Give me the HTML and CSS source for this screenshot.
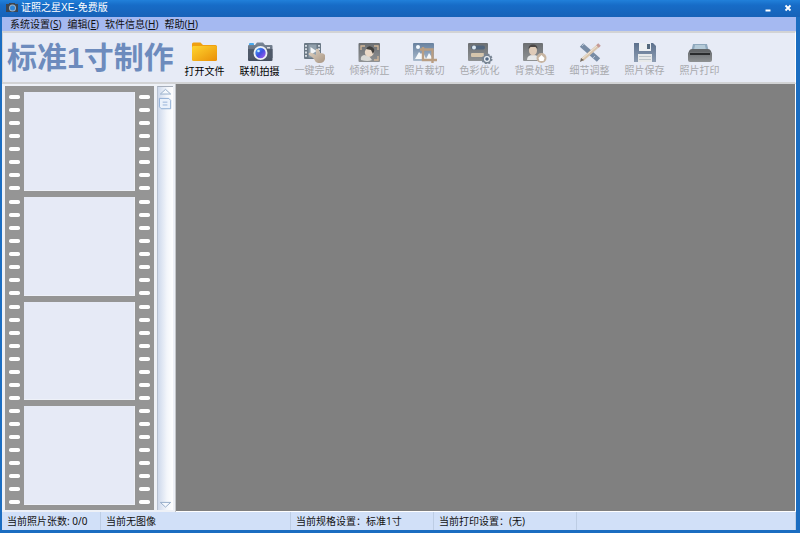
FILE: index.html
```html
<!DOCTYPE html>
<html lang="zh-CN">
<head>
<meta charset="utf-8">
<title>证照之星XE-免费版</title>
<link rel="stylesheet" href="styles.css">
</head>
<body>
<svg class="defs" aria-hidden="true">
  <defs>
    <pattern id="perf" width="12" height="13" patternUnits="userSpaceOnUse"><rect x="0" y="3" width="11" height="4" rx="1.8" fill="#fff"/></pattern>
    <linearGradient id="gold" x1="0" y1="0" x2="1" y2="1"><stop offset="0" stop-color="#ffd52e"/><stop offset="1" stop-color="#e98e08"/></linearGradient>
    <linearGradient id="steel" x1="0" y1="0" x2="0" y2="1"><stop offset="0" stop-color="#7b8898"/><stop offset="1" stop-color="#454e5e"/></linearGradient>
    <linearGradient id="disk" x1="0" y1="0" x2="0" y2="1"><stop offset="0" stop-color="#5c708d"/><stop offset="1" stop-color="#8d9db3"/></linearGradient>
    <linearGradient id="lens" x1="0" y1="0" x2="1" y2="1"><stop offset="0" stop-color="#3bb4ff"/><stop offset=".5" stop-color="#3f4fe0"/><stop offset="1" stop-color="#b45cf0"/></linearGradient>
    <linearGradient id="dark" x1="0" y1="0" x2="0" y2="1"><stop offset="0" stop-color="#6c6f72"/><stop offset="1" stop-color="#8f9294"/></linearGradient>
    <linearGradient id="blue" x1="0" y1="0" x2="0" y2="1"><stop offset="0" stop-color="#68819f"/><stop offset="1" stop-color="#a9bacd"/></linearGradient>
    <linearGradient id="skin" x1="0" y1="0" x2="1" y2="1"><stop offset="0" stop-color="#e3d6c6"/><stop offset="1" stop-color="#a89684"/></linearGradient>
  </defs>
</svg>
<div class="window">
  <header class="titlebar">
    <svg class="appicon" viewBox="0 0 12 10"><path d="M0 1h3V0h6v1h3v8H0z" fill="#3c4551"/><circle cx="6.500" cy="5" r="3.500" fill="#9fb4c8"/><circle cx="6.500" cy="5" r="2.500" fill="#2f86d8"/></svg>
    <h1 class="title">证照之星XE-免费版</h1>
    <button class="winbtn" aria-label="最小化"><svg viewBox="0 0 8 8"><path d="M1.500 6.500h5" stroke="#fff" stroke-width="2"/></svg></button>
    <button class="winbtn" aria-label="关闭"><svg viewBox="0 0 8 8"><path d="M1.500 1.500l5 5M6.500 1.500l-5 5" stroke="#fff" stroke-width="1.800"/></svg></button>
  </header>
  <nav class="menubar">
    <button>系统设置(<u>S</u>)</button>
    <button>编辑(<u>E</u>)</button>
    <button>软件信息(<u>H</u>)</button>
    <button>帮助(<u>H</u>)</button>
  </nav>
  <div class="toolbar">
    <h2 class="mode">标准1寸制作</h2>
    <div class="tools">
      <button class="tool"><svg viewBox="0 0 28 24"><path d="M1 4q0-1.500 1.500-1.500h7L12 5h12.500Q26 5 26 6.500V13H1z" fill="#f0a010"/><rect x="1" y="6" width="25" height="15" rx="1.500" fill="url(#gold)"/></svg><span>打开文件</span></button>
      <button class="tool"><svg viewBox="0 0 28 24"><rect x="3" y="3" width="5" height="3" rx="1" fill="#48a9ee"/><path d="M2 6q0-1 1-1h6l2-2.500h6L19 5h6.500q1 0 1 1v14q0 1-1 1H3q-1 0-1-1z" fill="url(#steel)"/><rect x="2" y="9" width="24.500" height="9" fill="#4f5969"/><circle cx="14.500" cy="13" r="7" fill="#eef1f5"/><circle cx="14.500" cy="13" r="5.200" fill="url(#lens)"/><circle cx="12.500" cy="11" r="1.300" fill="#bfeaff"/><rect x="21" y="7" width="3" height="1.500" fill="#ddd"/></svg><span>联机拍摄</span></button>
      <button class="tool" disabled><svg viewBox="0 0 28 24"><rect x="3" y="3" width="17" height="16" rx="1" fill="#6b7986"/><path d="M5 5v13M18 5v13" stroke="#e8edf2" stroke-width="1.700" stroke-dasharray="1.800 1.500"/><rect x="7.500" y="4.500" width="8" height="13" fill="#91a0ac"/><path d="M9.500 7l6 4-6 4z" fill="#f2f5f8"/><path d="M8 13q1-1 3 0l4 2V9q2-1 3 1l1 3q4 0 5 2v4q-1 4-5 4h-2q-3-1-4-4l-2-2-3-2q-1-1 0-2z" fill="url(#skin)"/></svg><span>一键完成</span></button>
      <button class="tool" disabled><svg viewBox="0 0 28 24"><rect x="2.500" y="3" width="21.500" height="19" rx="1" fill="url(#dark)"/><path d="M5 10V6h4M18 6h4v4M22 16v4h-4" fill="none" stroke="#d1b698" stroke-width="1.300"/><path d="M5 20q-1-4 3-5l5 1 3 4q-4 2-11 0z" fill="#d9d9d5"/><ellipse cx="13.500" cy="12" rx="4.500" ry="5" transform="rotate(35 13.500 12)" fill="#ead9c7"/><path d="M10 9q2-4 6-2 4 2 1 7l-2-4z" fill="#41403e"/></svg><span>倾斜矫正</span></button>
      <button class="tool" disabled><svg viewBox="0 0 28 24"><rect x="2" y="3" width="21" height="18" rx="1" fill="url(#blue)"/><circle cx="7" cy="7" r="2" fill="#f5fbff"/><path d="M4 19l4-7 2 2 2-2 3 7zM15 19l3-6 4 6z" fill="#f5f8fa"/><path d="M12 7v13h14M9 9.500h12.500V23" fill="none" stroke="#b99e83" stroke-width="2.400"/></svg><span>照片裁切</span></button>
      <button class="tool" disabled><svg viewBox="0 0 28 24"><rect x="2" y="3" width="20" height="18" rx="1" fill="url(#dark)"/><rect x="5" y="5.500" width="14" height="4" rx="2" fill="#52667e"/><circle cx="8" cy="7.500" r="2" fill="#dce8f2"/><rect x="5" y="13" width="13" height="4" rx="1" fill="#d5c5ac"/><circle cx="21" cy="19" r="4.500" fill="#788593" stroke="#788593" stroke-width="2" stroke-dasharray="2 1.500"/><circle cx="21" cy="19" r="3" fill="#edf1f6"/><circle cx="21" cy="19" r="1.800" fill="#536984"/></svg><span>色彩优化</span></button>
      <button class="tool" disabled><svg viewBox="0 0 28 24"><rect x="2" y="3" width="20" height="18" rx="1" fill="url(#dark)"/><path d="M6 20q0-5 6-5t7 5z" fill="#e6e8e9"/><ellipse cx="12" cy="10.500" rx="4" ry="5" fill="#dfcbb8"/><path d="M7.500 9q0-4.500 4.500-4.500t4.500 4.500l-2-2H9.500z" fill="#4b4745"/><circle cx="20.500" cy="18" r="5" fill="#c7b5a2"/><path d="M20.500 15l3 3-1 3h-4l-1-3z" fill="#fff"/></svg><span>背景处理</span></button>
      <button class="tool" disabled><svg viewBox="0 0 28 24"><path d="M5.500 5l17 15" stroke="#778ba5" stroke-width="5"/><path d="M8 4l-2 2M19 16l-2 2" stroke="#b6c3d3"/><path d="M6 20L23 5" stroke="#d9c5ad" stroke-width="3.500"/><path d="M6 19L22 5" stroke="#f0e7da"/><path d="M21.500 6.500l2-2" stroke="#c59a97" stroke-width="3.600"/><path d="M4 22l1-4 3 2z" fill="#756b62"/></svg><span>细节调整</span></button>
      <button class="tool" disabled><svg viewBox="0 0 28 24"><path d="M3 3h19l3 3v16H3z" fill="url(#disk)"/><rect x="8" y="3" width="12" height="8" fill="#eceff2"/><rect x="16" y="4" width="3" height="5" fill="#53687c"/><rect x="7" y="14" width="14" height="8" fill="#e7e9ea"/><path d="M8 16.500h12M8 19.500h12" stroke="#bec5ca"/></svg><span>照片保存</span></button>
      <button class="tool" disabled><svg viewBox="0 0 28 24"><path d="M7 4h14l2 8H5z" fill="#8fa8bd"/><path d="M9 5h10l1 5H8z" fill="#b5cad8"/><path d="M3 11q1-2 3-2h16q2 0 3 2l1 4H2z" fill="#626568"/><rect x="2" y="12" width="24" height="10" rx="2" fill="url(#dark)"/><path d="M4 14h20" stroke="#292b2d" stroke-width="2"/></svg><span>照片打印</span></button>
    </div>
  </div>
  <main class="workspace">
    <aside class="sidebar">
      <div class="film">
        <div class="frame"><svg class="holes"><rect width="100%" height="100%" fill="url(#perf)"/></svg><div class="photo"></div><svg class="holes"><rect width="100%" height="100%" fill="url(#perf)"/></svg></div>
        <div class="frame"><svg class="holes"><rect width="100%" height="100%" fill="url(#perf)"/></svg><div class="photo"></div><svg class="holes"><rect width="100%" height="100%" fill="url(#perf)"/></svg></div>
        <div class="frame"><svg class="holes"><rect width="100%" height="100%" fill="url(#perf)"/></svg><div class="photo"></div><svg class="holes"><rect width="100%" height="100%" fill="url(#perf)"/></svg></div>
        <div class="frame"><svg class="holes"><rect width="100%" height="100%" fill="url(#perf)"/></svg><div class="photo"></div><svg class="holes"><rect width="100%" height="100%" fill="url(#perf)"/></svg></div>
      </div>
      <div class="scroller">
        <button aria-label="向上滚动"><svg viewBox="0 0 16 10"><path d="M2.500 7.500h11L8 2.500z" fill="#f4f8fd" stroke="#93abc8"/></svg></button>
        <div class="thumb"><svg viewBox="0 0 16 14"><path d="M1.500 1.500h10l2 2v9h-10l-2-2z" fill="#eaf1fb" stroke="#8aaad2"/><path d="M5 5.500h5M5 8.500h5" stroke="#93b0d6"/></svg></div>
        <button class="down" aria-label="向下滚动"><svg viewBox="0 0 16 10"><path d="M2.500 1.500h11L8 6.500z" fill="#f4f8fd" stroke="#93abc8"/></svg></button>
      </div>
    </aside>
    <section class="canvas"></section>
  </main>
  <footer class="status">
    <span class="count">当前照片张数: 0/0</span>
    <span class="image">当前无图像</span>
    <span class="spec">当前规格设置：标准1寸</span>
    <span class="print">当前打印设置：(无)</span>
    <span class="rest"></span>
  </footer>
</div>
</body>
</html>
```
FILE: styles.css
```css
* { box-sizing: border-box; }

body {
  margin: 0;
  font-family: "Noto Sans", "Noto Sans CJK SC", sans-serif;
  font-size: 10px;
  line-height: 14px;
  color: #111;
}

button {
  margin: 0;
  padding: 0;
  border: 0;
  background: none;
  font: inherit;
  color: inherit;
}

svg { display: block; }

.defs { position: absolute; width: 0; height: 0; }

.window {
  display: flex;
  flex-direction: column;
  height: 100vh;
  padding: 0 4px 3px 2px;
  background: #1b6dc1;
}

.titlebar {
  display: flex;
  align-items: center;
  flex: 0 0 17px;
  margin: 0 -4px 0 -2px;
  padding: 0 8px 2px 6px;
  background: linear-gradient(#2180da, #176cc7 30%, #1762b8);
  color: #fff;
}

.appicon { width: 12px; height: 10px; }

.title {
  flex: 1;
  margin: 0 0 0 3px;
  font-family: "Liberation Sans", "Noto Sans CJK SC", sans-serif;
  font-size: 10px;
  font-weight: 400;
}

.winbtn { width: 8px; margin-left: 12px; }

.menubar {
  display: flex;
  gap: 6px;
  flex: 0 0 14px;
  padding-left: 8px;
  background: #a5b9f1;
}

.toolbar {
  display: flex;
  flex: 0 0 53px;
  border: 2px solid #d2d3d5;
  border-left-width: 1px;
  border-right: 1px solid #fff;
  background: #e7ebf6;
}

.mode {
  flex: 0 0 174px;
  margin: 0;
  padding-left: 4px;
  font-family: "Liberation Sans", "Noto Sans CJK SC", sans-serif;
  font-size: 30px;
  line-height: 49px;
  white-space: nowrap;
  color: #6d8bbd;
}

.tools { display: flex; }

.tool {
  display: flex;
  flex-direction: column;
  align-items: center;
  width: 55px;
  padding-top: 7px;
  line-height: 14px;
  color: #000;
}

.tool svg { width: 28px; height: 24px; }

.tool:disabled { color: #a7a9ad; }

.tool:disabled span { margin-top: -1px; }

.workspace {
  display: flex;
  flex: 1;
  min-height: 0;
  background: #eef1f7;
}

.sidebar {
  display: flex;
  gap: 3px;
  flex: 0 0 174px;
  padding: 2px 2px 2px 3px;
  border-right: 1px solid #c3c5c8;
}

.film {
  display: flex;
  flex-direction: column;
  gap: 6px;
  flex: 1;
  padding: 6px 4px 5px;
  background: #959595;
}

.frame { display: flex; gap: 4px; flex: 1; min-height: 0; }

.holes { width: 11px; height: 100%; }

.photo {
  flex: 1;
  background: #e6eaf6;
  border: 1px solid #eef1f8;
  border-width: 0 1px 1px 0;
}

.scroller {
  display: flex;
  flex-direction: column;
  width: 16px;
  border-top: 1px solid #a6aebb;
  border-left: 1px solid #b6c0d0;
  background: linear-gradient(90deg, #ced9ec, #f3f6fb 60%, #fff);
}

.scroller svg { width: 15px; }

.thumb { margin-top: 1px; }

.down { margin-top: auto; }

.canvas {
  flex: 1;
  border: 0 solid #fff;
  border-width: 0 1px 1px 0;
  background: #808080;
}

.status {
  display: flex;
  flex: 0 0 18px;
  line-height: 18px;
  background: #d1e0f8;
}

.status span {
  padding-left: 5px;
  border-right: 1px solid #bdcde4;
  white-space: nowrap;
}

.count { flex: 0 0 99px; }
.image { flex: 0 0 190px; }
.spec { flex: 0 0 143px; }
.print { flex: 0 0 143px; }
.rest { flex: 1; }
```
